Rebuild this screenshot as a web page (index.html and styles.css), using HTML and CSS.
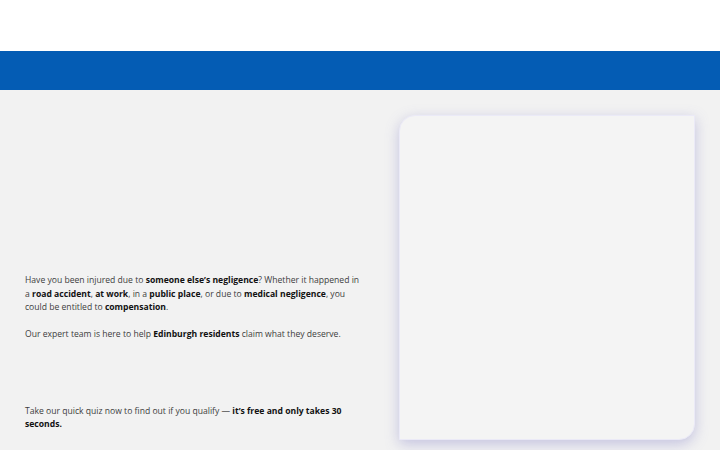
FILE: index.html
```html
<!DOCTYPE html>
<html>
<head>
<meta charset="utf-8">
<link rel="stylesheet" href="styles.css">
</head>
<body>
<header class="top"></header>
<div class="band"></div>
<main class="hero">
  <section class="copy">
    <p class="p1">Have you been injured due to <b>someone else’s negligence</b>? Whether it happened in a <b>road accident</b>, <b>at work</b>, in a <b>public place</b>, or due to <b>medical negligence</b>, you could be entitled to <b>compensation</b>.</p>
    <p class="p2">Our expert team is here to help <b>Edinburgh residents</b> claim what they deserve.</p>
    <p class="p3">Take our quick quiz now to find out if you qualify — <b>it’s free and only takes 30 seconds.</b></p>
  </section>
  <aside class="card"></aside>
</main>
</body>
</html>
```
FILE: styles.css
```css
* { box-sizing: border-box; }
html, body { margin: 0; padding: 0; }
body {
  width: 720px;
  height: 450px;
  overflow: hidden;
  background: #f2f2f2;
  font-family: "Open Sans", "DejaVu Sans", sans-serif;
  color: #3d3d3d;
}
.top { height: 51px; background: #ffffff; }
.band { height: 39px; background: #045cb4; }
.hero {
  display: flex;
  align-items: flex-start;
  padding: 25px 0 0 25px;
  gap: 35px;
}
.copy {
  width: 339px;
  padding-top: 159px;
  font-size: 8.6px;
  line-height: 13.5px;
}
.copy p { margin: 0; }
.copy b { font-weight: 700; color: #111; }
.p2 { margin-top: 13px !important; }
.p3 { margin-top: 63.5px !important; }
.card {
  width: 296px;
  height: 325px;
  background: #f4f4f4;
  border: 1px solid #ebeaf7;
  border-radius: 16px 0 16px 0;
  box-shadow: 0 4px 14px rgba(110, 105, 190, 0.35);
}
```
